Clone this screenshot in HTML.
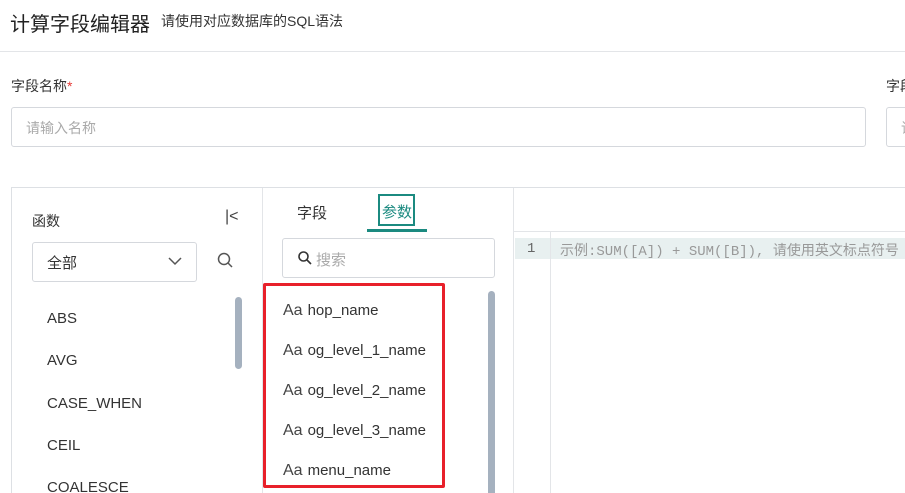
<!DOCTYPE html>
<html style="width:905px;height:493px;overflow:hidden"><head><meta charset="utf-8"><style>
*{box-sizing:border-box;margin:0;padding:0}
body{width:905px;height:493px;overflow:hidden;background:#fff;font-family:"Liberation Sans","Noto Sans CJK SC",sans-serif;color:#333;position:relative}
.a{position:absolute;white-space:nowrap}
.inp{position:absolute;border:1px solid #d5d8dd;border-radius:3px;background:#fff}
.fn{position:absolute;left:47px;font-size:15px;color:#333}
.fd{position:absolute;left:283px;font-size:15px;color:#333}
.fd b{font-weight:normal;font-size:16px;color:#444;margin-right:5px}
</style></head><body>
<div class="a" style="left:10px;top:8px;font-size:20px;color:#222">计算字段编辑器</div>
<div class="a" style="left:161px;top:11px;font-size:14px;color:#333">请使用对应数据库的SQL语法</div>
<div class="a" style="left:0;top:51px;width:905px;height:1px;background:#e3e5e8"></div>
<div class="a" style="left:11px;top:76px;font-size:14px;color:#333">字段名称<span style="color:#e53935">*</span></div>
<div class="a" style="left:886px;top:76px;font-size:14px;color:#333">字段</div>
<div class="inp" style="left:11px;top:107px;width:855px;height:40px"></div>
<div class="a" style="left:26px;top:118px;font-size:14px;color:#aaa">请输入名称</div>
<div class="inp" style="left:886px;top:107px;width:40px;height:40px"></div>
<div class="a" style="left:901px;top:118px;font-size:14px;color:#aaa">请</div>

<div class="a" style="left:11px;top:187px;width:900px;height:306px;border:1px solid #dde0e4;border-bottom:none"></div>
<div class="a" style="left:262px;top:188px;width:1px;height:305px;background:#e3e5e8"></div>
<div class="a" style="left:513px;top:188px;width:1px;height:305px;background:#e3e5e8"></div>

<div class="a" style="left:32px;top:211px;font-size:14px">函数</div>
<div class="a" style="left:225px;top:208px;font-size:16px;color:#444">|&lt;</div>
<div class="inp" style="left:32px;top:242px;width:165px;height:40px"></div>
<div class="a" style="left:47px;top:252px;font-size:15px">全部</div>
<svg class="a" style="left:168px;top:256px" width="14" height="10"><path d="M1 2l6 6 6-6" fill="none" stroke="#555" stroke-width="1.5"/></svg>
<svg class="a" style="left:216px;top:251px" width="18" height="18"><circle cx="8" cy="8" r="5.5" fill="none" stroke="#555" stroke-width="1.5"/><path d="M12 12l4 4" stroke="#555" stroke-width="1.5"/></svg>
<div class="a" style="left:235px;top:297px;width:7px;height:72px;border-radius:4px;background:#a5b1bf"></div>
<div class="fn" style="top:310px">ABS</div>
<div class="fn" style="top:352px">AVG</div>
<div class="fn" style="top:395px">CASE_WHEN</div>
<div class="fn" style="top:437px">CEIL</div>
<div class="fn" style="top:479px">COALESCE</div>

<div class="a" style="left:297px;top:202px;font-size:15px">字段</div>
<div class="a" style="left:378px;top:194px;width:37px;height:32px;border:2px solid #1b8a80"></div>
<div class="a" style="left:382px;top:201px;font-size:15px;color:#1b8a80">参数</div>
<div class="a" style="left:367px;top:229px;width:60px;height:3px;background:#1b8a80"></div>
<div class="inp" style="left:282px;top:238px;width:213px;height:40px"></div>
<svg class="a" style="left:297px;top:250px" width="16" height="16"><circle cx="6.5" cy="6.5" r="4.5" fill="none" stroke="#333" stroke-width="1.6"/><path d="M10 10l4 4" stroke="#333" stroke-width="1.6"/></svg>
<div class="a" style="left:316px;top:249px;font-size:15px;color:#aaa">搜索</div>
<div class="a" style="left:488px;top:291px;width:7px;height:210px;border-radius:4px;background:#a5b1bf"></div>
<div class="fd" style="top:302px"><b>Aa</b>hop_name</div>
<div class="fd" style="top:342px"><b>Aa</b>og_level_1_name</div>
<div class="fd" style="top:382px"><b>Aa</b>og_level_2_name</div>
<div class="fd" style="top:422px"><b>Aa</b>og_level_3_name</div>
<div class="fd" style="top:462px"><b>Aa</b>menu_name</div>
<div class="a" style="left:263px;top:283px;width:182px;height:205px;border:3px solid #e8202a;border-radius:2px"></div>

<div class="a" style="left:514px;top:231px;width:391px;height:1px;background:#e3e5e8"></div>
<div class="a" style="left:515px;top:238px;width:390px;height:21px;background:#e8f0f0"></div>
<div class="a" style="left:550px;top:232px;width:1px;height:261px;background:#e3e5e8"></div>
<div class="a" style="left:527px;top:241px;font-family:'Liberation Mono','Noto Sans CJK SC',monospace;font-size:14px;color:#666">1</div>
<div class="a" style="left:560px;top:240px;font-family:'Liberation Mono','Noto Sans CJK SC',monospace;font-size:14px;color:#999">示例:SUM([A]) + SUM([B]), 请使用英文标点符号</div>
</body></html>
